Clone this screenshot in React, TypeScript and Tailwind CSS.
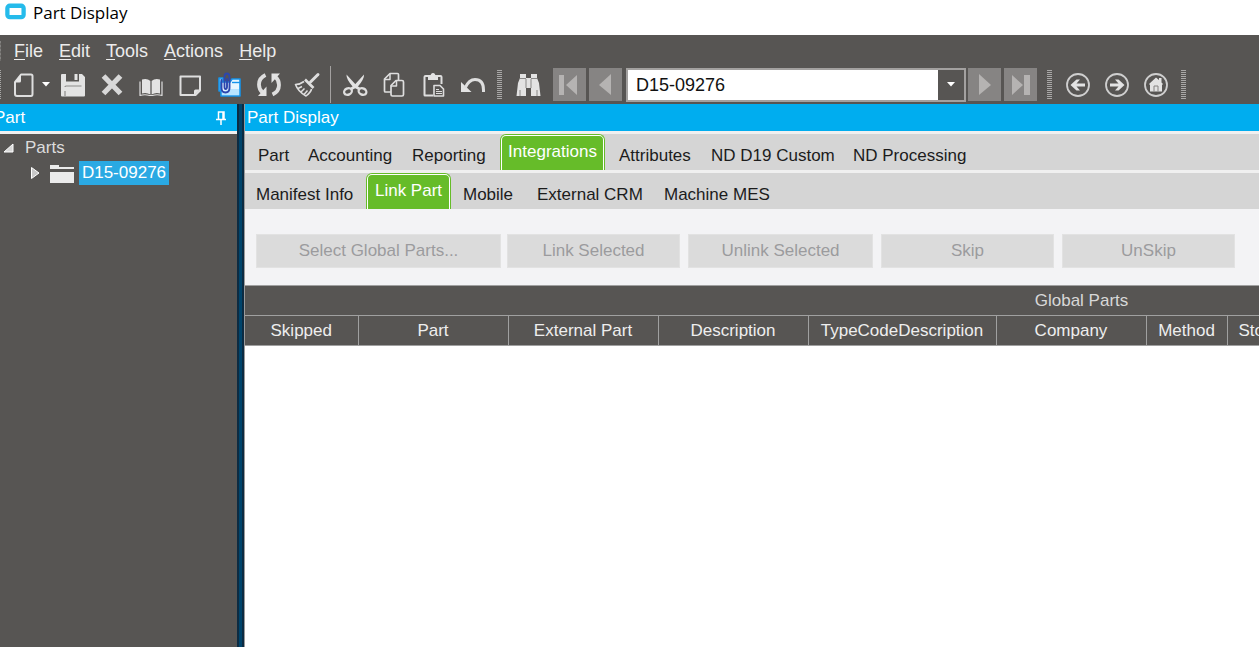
import React, { useState } from "react";

type IconProps = { children: React.ReactNode };

function Icon({ children }: IconProps) {
  return (
    <svg
      viewBox="0 0 30 30"
      className="size-[30px] shrink-0"
      fill="none"
      stroke="#dedede"
      strokeWidth="2"
      strokeLinejoin="round"
      aria-hidden="true"
    >
      {children}
    </svg>
  );
}

const fill = { fill: "#e3e3e3", stroke: "none" };

const NewIcon = () => (
  <Icon>
    <path d="M12 4.500H22Q23.500 4.500 23.500 6V24Q23.500 26 22 26H8Q6 26 6 24V12Z" />
    <path {...fill} d="M5.500 12.500 12 4v7q0 1.500-1.500 1.500Z" />
  </Icon>
);

const SaveIcon = () => (
  <Icon>
    <path {...fill} d="M4 4H8V11.500H21V4H24L27 7V25.500Q27 26.500 26 26.500H4Q3 26.500 3 25.500V5Q3 4 4 4Z" />
    <path {...fill} d="M16.500 4H19.500V10H16.500Z" />
    <path stroke="#8c8b8a" strokeWidth="1.2" d="M7 26V21M7 17Q7 16 8 16H23.500" />
  </Icon>
);

const DeleteIcon = () => (
  <Icon>
    <path stroke="#d8d8d8" strokeWidth="5.2" strokeLinejoin="miter" d="M6.500 6 23.500 23.500M23.500 6 6.500 23.500" />
  </Icon>
);

const BookIcon = () => (
  <Icon>
    <path {...fill} d="M6 9.500Q11 8 14.500 11V24.500Q10 22 6 23.500Z" />
    <path {...fill} d="M24 9.500Q19 8 15.500 11V24.500Q20 22 24 23.500Z" />
    <path strokeWidth="1.200" d="M4 11.500V25.500Q9 24 13.500 25.500H16.500Q21 24 26 25.500V11.500" />
    <path stroke="#777" strokeWidth="1" d="M15 11V24" />
  </Icon>
);

const NoteIcon = () => (
  <Icon>
    <path d="M5.500 6.500H25V20.500L20.500 25H5.500Z" />
    <path {...fill} d="M25 19.500H20.500Q19 19.500 19 21V25.500Z" />
  </Icon>
);

const AttachIcon = () => (
  <Icon>
    <path fill="#8fd2fb" stroke="#1594ec" strokeWidth="1.600" d="M5 8H9V21H5Z" />
    <path fill="#e8f7ff" stroke="#1594ec" strokeWidth="1.600" d="M7 12H16L18 9H26V26H7Z" />
    <path fill="#b8e4ff" stroke="none" d="M17 19H25V25H8V22Z" />
    <path stroke="#1594ec" strokeWidth="1.400" d="M18 12.500H26" />
    <path
      stroke="#2d46ad"
      strokeWidth="1.900"
      strokeLinecap="round"
      d="M7.500 10V18Q7.500 22.500 11.500 22.500T15.500 18V7Q15.500 3.500 13 3.500T10.500 7V17Q10.500 19 11.700 19T13 17V9"
    />
  </Icon>
);

const RefreshIcon = () => (
  <Icon>
    <path strokeWidth="3.800" d="M12.500 5Q6 8 6 14.500Q6 19.500 9.500 22.500" />
    <path {...fill} d="M13.500 16.500V26H5Z" />
    <path strokeWidth="3.800" d="M19.500 24.500Q26 21.500 26 15Q26 10 22.500 7" />
    <path {...fill} d="M18.500 13V3.500H27Z" />
  </Icon>
);

const BroomIcon = () => (
  <Icon>
    <path strokeWidth="3" strokeLinecap="round" d="M26 4.500 18.500 12" />
    <path strokeWidth="2.600" d="M13 9.500 21.500 18" />
    <path strokeWidth="1.600" d="M12 11.500Q8 14.500 3.500 14.500Q6 21.500 14 26Q19 22 19.500 19" />
    <path strokeWidth="1.500" d="M6 18.500 10 16.500M9 22 12.500 18.500M12 24.500 15.500 20.500" />
  </Icon>
);

const CutIcon = () => (
  <Icon>
    <path {...fill} d="M6.500 4.500 16.500 15.500 20.500 18 18.500 20 13 17Q6 9 6.500 4.500Z" />
    <path {...fill} d="M24 4.500 14 15.500 10 18 12 20 17.500 17Q24.500 9 24 4.500Z" />
    <ellipse cx="8" cy="21.500" rx="4" ry="3.200" transform="rotate(-25 8 21.500)" strokeWidth="2.300" />
    <ellipse cx="22.500" cy="21.500" rx="4" ry="3.200" transform="rotate(25 22.500 21.500)" strokeWidth="2.300" />
  </Icon>
);

const CopyIcon = () => (
  <Icon>
    <path strokeWidth="1.700" d="M12 22H6.500Q5.500 22 5.500 21V9L11 3.500H18.500Q19.500 3.500 19.500 4.500V10" />
    <path strokeWidth="1.500" d="M5.500 9.500H11V4" />
    <path strokeWidth="1.700" d="M17 10.500H23Q24.500 10.500 24.500 12V24.500Q24.500 26 23 26H13.500Q12 26 12 24.500V15.500Z" />
    <path strokeWidth="1.500" d="M12 16H17.500V10.500" />
  </Icon>
);

const PasteIcon = () => (
  <Icon>
    <path d="M15 25.500H7Q6.500 25.500 6.500 25V7Q6.500 6 7.500 6H22.500Q23.500 6 23.500 7V14" />
    <path {...fill} d="M10 10V6.500H12.500Q12.500 3 15 3T17.500 6.500H20V10Z" />
    <path fill="#575553" strokeWidth="1.600" d="M16 15.500H22L25.500 19V26H16Z" />
    <path strokeWidth="1.200" d="M18 19.500H21M18 21.500H24M18 23.500H24" />
  </Icon>
);

const UndoIcon = () => (
  <Icon>
    <path {...fill} d="M4 12V22H14.500Z" />
    <path strokeWidth="3" d="M8 18Q12 9.500 18 9.500Q26.500 9.500 26.500 20V22" />
  </Icon>
);

const FindIcon = () => (
  <Icon>
    <path {...fill} d="M7 4H13V8H18V4H24V8L26 13L27.500 26H18V18H13V26H3.500L5 13L7 8Z" />
    <path stroke="#8a8988" strokeWidth="1" d="M7 8.500H13M18 8.500H24M13 9V18M18 9V18M7 20V26M24 20V26" />
  </Icon>
);

const Ring = ({ children }: IconProps) => (
  <Icon>
    <circle cx="15" cy="15" r="11" stroke="#cfcfcf" strokeWidth="1.800" />
    {children}
  </Icon>
);

const BackIcon = () => (
  <Ring>
    <path {...fill} d="M7.500 15 13.500 9.500H17L13.500 13.500H22V16.500H13.500L17 20.500H13.500Z" />
  </Ring>
);

const ForwardIcon = () => (
  <Ring>
    <path {...fill} d="M22.500 15 16.500 9.500H13L16.500 13.500H8V16.500H16.500L13 20.500H16.500Z" />
  </Ring>
);

const HomeIcon = () => (
  <Ring>
    <path {...fill} d="M8 14 15 7.500 18 10V8H20.500V12.500L22 14L21 15V21.500H9V15Z" />
    <path stroke="#848281" strokeWidth="1" d="M13 21.500V16H17V21.500" />
  </Ring>
);

function ToolButton({ label, children }: { label: string; children: React.ReactNode }) {
  return (
    <button type="button" aria-label={label} className="flex h-[34px] w-[39px] shrink-0 items-center justify-center">
      {children}
    </button>
  );
}

function StepButton({ label, path }: { label: string; path: string }) {
  return (
    <button type="button" aria-label={label} className="flex size-[33px] shrink-0 items-center justify-center bg-[#868483]">
      <svg viewBox="0 0 33 33" className="size-[33px]" fill="#b5b3b2" aria-hidden="true">
        <path d={path} />
      </svg>
    </button>
  );
}

function Grip() {
  return (
    <svg viewBox="0 0 5 30" className="h-[30px] w-[5px] shrink-0" aria-hidden="true">
      <path d="M2.500 0V30" stroke="#a9a8a7" strokeWidth="5" strokeDasharray="1 1" />
    </svg>
  );
}

function EdgeGrip({ className }: { className: string }) {
  return (
    <svg viewBox="0 0 1 30" preserveAspectRatio="none" className={className} aria-hidden="true">
      <path d="M.5 0V30" stroke="#a9a8a7" strokeDasharray="1 1" />
    </svg>
  );
}

const menus = ["File", "Edit", "Tools", "Actions", "Help"];

type Tab = { label: string; width: string };

const mainTabs: Tab[] = [
  { label: "Part", width: "w-[50px]" },
  { label: "Accounting", width: "w-[104px]" },
  { label: "Reporting", width: "w-[88px]" },
  { label: "Integrations", width: "w-[105px] mr-[14px]" },
  { label: "Attributes", width: "w-[92px]" },
  { label: "ND D19 Custom", width: "w-[142px]" },
  { label: "ND Processing", width: "w-[142px]" },
];

const subTabs: Tab[] = [
  { label: "Manifest Info", width: "w-[110px]" },
  { label: "Link Part", width: "w-[85px] mr-3" },
  { label: "Mobile", width: "w-[74px]" },
  { label: "External CRM", width: "w-[127px]" },
  { label: "Machine MES", width: "w-[127px]" },
];

function TabStrip({ tabs, active, name, pad }: { tabs: Tab[]; active: string; name: string; pad: string }) {
  return (
    <div role="tablist" aria-label={name} className={`flex h-9 bg-[#d5d5d5] text-[17px] leading-5 ${pad}`}>
      {tabs.map((tab) =>
        tab.label === active ? (
          <button
            key={tab.label}
            type="button"
            role="tab"
            aria-selected="true"
            className={`h-9 shrink-0 whitespace-nowrap rounded-t-md border border-b-0 border-[#66bc29] bg-white px-px pt-px text-white ${tab.width}`}
          >
            <span className="flex h-full items-start justify-center rounded-t-sm bg-[#66bc29] pt-1.5">{tab.label}</span>
          </button>
        ) : (
          <button
            key={tab.label}
            type="button"
            role="tab"
            aria-selected="false"
            className={`flex h-9 shrink-0 items-center whitespace-nowrap pt-2 text-left text-[#1c1c1c] ${tab.width}`}
          >
            {tab.label}
          </button>
        ),
      )}
    </div>
  );
}

const actions = [
  { label: "Select Global Parts...", width: "w-[245px] mr-1.5" },
  { label: "Link Selected", width: "w-[173px] mr-2" },
  { label: "Unlink Selected", width: "w-[185px] mr-2" },
  { label: "Skip", width: "w-[173px] mr-2" },
  { label: "UnSkip", width: "w-[173px]" },
];

const columns = [
  { label: "Skipped", width: "w-[113px]" },
  { label: "Part", width: "w-[150px]" },
  { label: "External Part", width: "w-[150px]" },
  { label: "Description", width: "w-[150px]" },
  { label: "TypeCodeDescription", width: "w-[188px]" },
  { label: "Company", width: "w-[150px]" },
  { label: "Method", width: "w-[81px]" },
];

export default function App() {
  const [part, setPart] = useState("D15-09276");
  return (
    <div className="flex min-h-screen flex-col overflow-hidden bg-white font-['Liberation_Sans',Arial,sans-serif]">
      <header className="flex h-[35px] items-start gap-[7px] pl-[5px] pt-[2px]">
        <svg viewBox="0 0 22 18" className="h-[18px] w-[21px]" aria-hidden="true">
          <rect x="2.500" y="3.500" width="17" height="12" rx="2.500" fill="#fff" stroke="#25bbeb" strokeWidth="4.500" />
        </svg>
        <h1 className="font-['Open_Sans','Noto_Sans',sans-serif] text-[17px] leading-[22px] text-black">Part Display</h1>
      </header>

      <div className="bg-[#575553] text-[#ececec]">
        <nav className="flex h-8 items-center text-lg leading-6">
          <EdgeGrip className="h-5 w-px" />
          <div className="flex gap-4 pl-[13px]">
            {menus.map((m) => (
              <button key={m} type="button">
                <span className="underline underline-offset-2">{m[0]}</span>
                {m.slice(1)}
              </button>
            ))}
          </div>
        </nav>

        <div className="flex h-[37px] items-center pb-0.5">
          <EdgeGrip className="h-[30px] w-px shrink-0" />
          <button type="button" aria-label="New" className="ml-2 flex shrink-0 items-center">
            <NewIcon />
          </button>
          <button type="button" aria-label="New options" className="flex h-[34px] w-[14px] shrink-0 items-center justify-center">
            <svg viewBox="0 0 8 5" className="h-[5px] w-2" fill="#fff" aria-hidden="true">
              <path d="M0 0H8L4 4.500Z" />
            </svg>
          </button>
          <ToolButton label="Save"><SaveIcon /></ToolButton>
          <ToolButton label="Delete"><DeleteIcon /></ToolButton>
          <ToolButton label="Book"><BookIcon /></ToolButton>
          <ToolButton label="Memo"><NoteIcon /></ToolButton>
          <ToolButton label="Attachments"><AttachIcon /></ToolButton>
          <ToolButton label="Refresh"><RefreshIcon /></ToolButton>
          <ToolButton label="Clear"><BroomIcon /></ToolButton>
          <div className="mx-1 h-[37px] w-px shrink-0 bg-[#a3a1a0]" />
          <ToolButton label="Cut"><CutIcon /></ToolButton>
          <ToolButton label="Copy"><CopyIcon /></ToolButton>
          <ToolButton label="Paste"><PasteIcon /></ToolButton>
          <ToolButton label="Undo"><UndoIcon /></ToolButton>
          <div className="flex w-[17px] shrink-0 justify-center"><Grip /></div>
          <ToolButton label="Find"><FindIcon /></ToolButton>
          <div className="ml-1.5 flex shrink-0 gap-[3px]">
            <StepButton label="First" path="M6 7H11V27H6ZM24 7V27L13 17Z" />
            <StepButton label="Previous" path="M22 6V27L10 17Z" />
          </div>
          <div className="ml-1 flex h-[34px] w-[340px] shrink-0 border-2 border-[#a3a1a0] bg-[#575553]">
            <input
              aria-label="Part number"
              value={part}
              onChange={(e) => setPart(e.target.value)}
              className="min-w-0 flex-1 bg-white pl-2 text-lg text-[#111] outline-none"
            />
            <button type="button" aria-label="Show list" className="flex w-[26px] items-center justify-center">
              <svg viewBox="0 0 8 5" className="h-[5px] w-2" fill="#fff" aria-hidden="true">
                <path d="M0 0H8L4 4.500Z" />
              </svg>
            </button>
          </div>
          <div className="ml-0.5 flex shrink-0 gap-[3px]">
            <StepButton label="Next" path="M11 6V27L23 17Z" />
            <StepButton label="Last" path="M8 7V27L19 17ZM20 7H26V27H20Z" />
          </div>
          <div className="flex w-[21px] shrink-0 justify-end pr-1.5"><Grip /></div>
          <ToolButton label="Back"><BackIcon /></ToolButton>
          <ToolButton label="Forward"><ForwardIcon /></ToolButton>
          <ToolButton label="Home"><HomeIcon /></ToolButton>
          <div className="pl-1.5"><Grip /></div>
        </div>
      </div>

      <div className="flex flex-1">
        <aside className="flex w-[237px] shrink-0 flex-col overflow-hidden bg-[#575553]">
          <div className="flex h-[27px] items-center justify-between bg-[#00adef] pr-2.5 text-white">
            <h2 className="-ml-1.5 text-[17px] leading-5">Part</h2>
            <button type="button" aria-label="Pin">
              <svg viewBox="0 0 12 14" className="h-3.5 w-3" fill="none" stroke="#fff" strokeWidth="1.500" aria-hidden="true">
                <path d="M3.500 8V1H9V8M8 1V8M1 8.500H11M6 9V14" />
              </svg>
            </button>
          </div>
          <div className="h-[3px] bg-[#f0f0f0]" />
          <ul className="pt-px text-[#dcdcdc]">
            <li>
              <div className="flex h-[26px] items-center pl-[3px] text-[17px] leading-5">
                <svg viewBox="0 0 11 10" className="mr-[11px] h-2.5 w-[11px]" aria-hidden="true">
                  <path d="M1 9H10V1Z" fill="#d8d8d8" stroke="#fff" />
                </svg>
                Parts
              </div>
              <ul>
                <li className="flex h-6 items-center pl-[30px] text-[17px] leading-5">
                  <svg viewBox="0 0 11 14" className="mr-2 h-3.5 w-[11px]" aria-hidden="true">
                    <path d="M1.500 1.500V12.500L9 7Z" fill="#c8c8c8" stroke="#fff" />
                  </svg>
                  <svg viewBox="0 0 25 19" className="mr-[5px] h-[19px] w-[25px]" fill="#ebebeb" aria-hidden="true">
                    <path d="M1 1H10V3H25V5H1ZM1 8H25V19H1Z" />
                  </svg>
                  <a href="#part" className="flex h-6 w-[90px] items-center justify-center bg-[#2aa9e3] text-white">D15-09276</a>
                </li>
              </ul>
            </li>
          </ul>
        </aside>

        <div className="w-[7px] shrink-0 border-x-2 border-l-[#0c2b42] border-r-[#0c2b42] bg-[#00446b]" />

        <main className="flex min-w-0 flex-1 flex-col overflow-hidden border-l border-[#9a9a9a]">
          <h2 className="h-[27px] bg-[#00adef] pl-0.5 text-[17px] leading-[27px] text-white">Part Display</h2>
          <div className="h-[3px] bg-[#f0f0f0]" />
          <TabStrip tabs={mainTabs} active="Integrations" name="Part sections" pad="pl-[13px]" />
          <div className="h-[3px] bg-[#f0f0f0]" />
          <TabStrip tabs={subTabs} active="Link Part" name="Integration sections" pad="pl-[11px]" />

          <div className="flex h-[76px] bg-[#f3f3f5] pl-[11px] pt-[25px] text-[17px]">
            {actions.map((a) => (
              <button
                key={a.label}
                type="button"
                disabled
                className={`h-[34px] shrink-0 border border-[#e2e2e2] bg-[#dbdbdb] text-[#9b9b9e] ${a.width}`}
              >
                {a.label}
              </button>
            ))}
          </div>

          <table className="w-[1673px] table-fixed border-collapse bg-[#575553] text-[17px] leading-5 text-[#eeeeee]">
            <colgroup>
              {columns.map((c) => (
                <col key={c.label} className={c.width} />
              ))}
              <col />
            </colgroup>
            <thead>
              <tr className="h-[30px]">
                <th colSpan={8} className="border-y border-[#a0a0a0] p-0 text-center font-normal text-[#d8d8d8]">
                  Global Parts
                </th>
              </tr>
              <tr className="h-[30px]">
                {columns.map((c) => (
                  <th key={c.label} className="whitespace-nowrap border border-l-0 border-[#a0a0a0] p-0 font-normal">
                    {c.label}
                  </th>
                ))}
                <th className="border-y border-[#a0a0a0] py-0 pl-[11px] text-left font-normal">Stock</th>
              </tr>
            </thead>
          </table>
        </main>
      </div>
    </div>
  );
}
